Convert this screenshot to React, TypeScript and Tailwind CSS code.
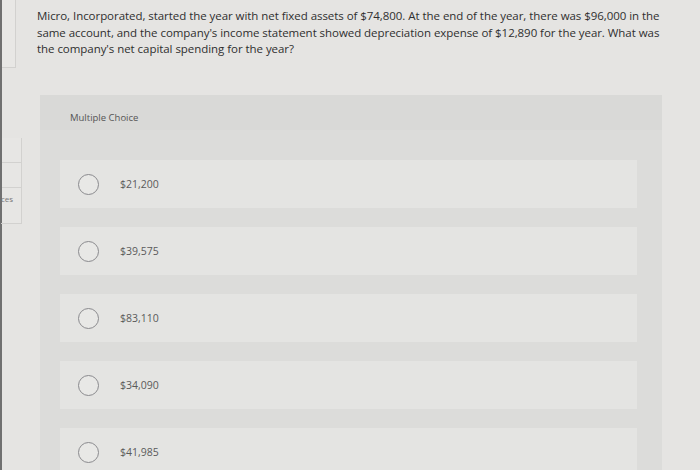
import React from "react";

const options = ["$21,200", "$39,575", "$83,110", "$34,090", "$41,985"];

export default function App() {
  return (
    <div
      className="w-[700px] h-[470px] overflow-hidden flex bg-[#e5e4e2]"
      style={{ fontFamily: "'Open Sans', 'Liberation Sans', sans-serif" }}
    >
      <div className="w-[2px] h-full bg-[#707070] shrink-0" />
      <div className="w-[20px] shrink-0 flex flex-col">
        <div className="w-[14px] h-[68px] border-r border-b border-[#d2d1cf] bg-[#e8e7e5]" />
        <div className="mt-[70px] w-[20px] flex flex-col border-r border-[#d2d1cf] bg-[#e7e6e4]">
          <div className="h-[25px] border-b border-[#d2d1cf]" />
          <div className="h-[25px] border-b border-[#d2d1cf]" />
          <div className="h-[36px] border-b border-[#d2d1cf] text-[8px] text-[#777] pt-[5px] -ml-[1px]">ces</div>
        </div>
      </div>
      <div className="flex-1 pl-[15px] pt-[8px] flex flex-col">
        <p className="w-[625px] text-[11.5px] leading-[16.6px] text-[#2f2f2f] tracking-[-0.05px]">
          Micro, Incorporated, started the year with net fixed assets of $74,800. At the end of the year, there was $96,000 in the same account, and the company's income statement showed depreciation expense of $12,890 for the year. What was the company's net capital spending for the year?
        </p>
        <div className="mt-[37px] ml-[3px] w-[622px] flex-1 bg-[#dcdcda] flex flex-col">
          <div className="h-[35px] bg-[#d9d9d7] pl-[30px] pt-[17px] text-[9.5px] text-[#555] leading-[12px]">
            Multiple Choice
          </div>
          <div className="pt-[30px] pl-[20px] pr-[25px] flex flex-col gap-[19px]">
            {options.map((o) => (
              <div key={o} className="h-[48px] bg-[#e4e4e2] flex items-center pl-[18px] pt-[2px]">
                <div className="w-[21px] h-[21px] rounded-full border-[1.5px] border-[#8a8a8e] bg-[#e8e8e6]" />
                <span className="ml-[21px] text-[10.5px] text-[#5a5a5a]">{o}</span>
              </div>
            ))}
          </div>
        </div>
      </div>
    </div>
  );
}
